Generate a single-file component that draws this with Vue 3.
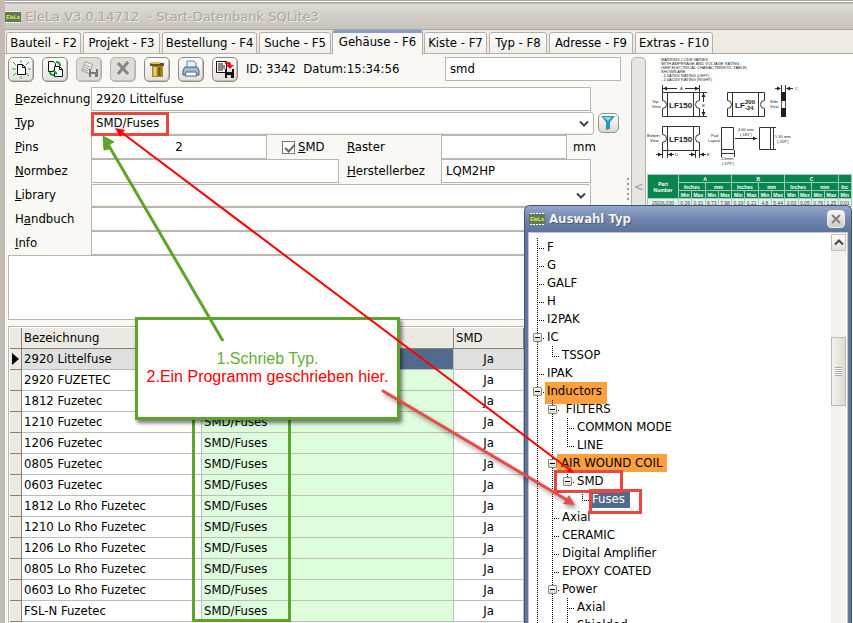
<template>
  <div class="app">
    <header class="titlebar">
      <svg class="logo" viewBox="0 0 16 12" aria-hidden="true">
        <rect y="1" width="16" height="10" fill="#64775a" />
        <path d="M1 .5h15M1 11.5h15" stroke="#fff" stroke-dasharray="2 1" />
        <text x="8" y="8">EleLa</text>
      </svg>
      <h1>EleLa V3.0.14712&nbsp; - Start-Datenbank SQLite3</h1>
    </header>

    <nav class="tabs">
      <button
        v-for="tab in tabs"
        :key="tab.key"
        class="tab"
        :class="[tab.key, { active: activeTab === tab.key }]"
        @click="activeTab = tab.key"
      >{{ tab.label }}</button>
    </nav>

    <main class="workspace">
      <section class="editor">
        <div class="toolbar">
          <button class="tool" aria-label="Neu">
            <svg viewBox="0 0 20 20">
              <path d="M6.500 5.500h5l3 3v7h-8zM11.500 5.500v3h3" fill="#fff" stroke="#111" />
              <path d="M2 3l3 3M18 3l-3 3M2 17l3-3M18 17l-3-3M10 1v3M1 10h4M17 10h3M10 17v3" stroke="#2bb52b" />
            </svg>
          </button>
          <button class="tool" aria-label="Kopieren">
            <svg viewBox="0 0 20 20">
              <path d="M3.500 2.500h5l2 2v8h-7z" fill="#fff" stroke="#111" />
              <path d="M9.500 7.500h5l3 3v7h-8z" fill="#fff" stroke="#111" />
              <path d="M14.500 7.500v3h3" fill="none" stroke="#111" />
              <path d="M11 3q4 0 4 4M5 13q0 3 4 3M8 11l4 4" fill="none" stroke="#18a038" stroke-width="2" />
            </svg>
          </button>
          <button class="tool disabled" aria-label="Speichern" disabled>
            <svg viewBox="0 0 20 20">
              <path d="M6.500 2.500l7 3-3 9-8-3z" fill="#eee" stroke="#999" />
              <path d="M6 6l5 2M5 8l5 2M4 10l5 2" stroke="#999" />
              <path d="M10 10h9v8h-9z" fill="#777" />
              <path d="M12 10h5v3h-5zM12 15h4v3h-4z" fill="#ddd" />
            </svg>
          </button>
          <button class="tool disabled" aria-label="Abbrechen" disabled>
            <svg viewBox="0 0 20 20">
              <path d="M5 4l10 11M15 3L5 15" stroke="#858585" stroke-width="3" />
            </svg>
          </button>
          <button class="tool" aria-label="Löschen">
            <svg viewBox="0 0 20 20">
              <path d="M5 6h11v12H5z" fill="#a8862b" />
              <path d="M3 4h14v3H3z" fill="#6d5412" />
              <path d="M4 3h9v2H4z" fill="#d8c050" />
              <path d="M8 8v9" stroke="#e8d36c" stroke-width="3" />
              <path d="M12.500 8v9" stroke="#6d5412" stroke-width="2" />
            </svg>
          </button>
          <button class="tool" aria-label="Drucken">
            <svg viewBox="0 0 20 20">
              <path d="M6 9V2h7l2 2v5" fill="#e6f3ff" stroke="#5c86b0" />
              <path d="M4 8h12l2 3v5H2v-5z" fill="#9fbbd8" stroke="#47617e" />
              <path d="M5 13h10l1 4H4z" fill="#fff" stroke="#47617e" />
            </svg>
          </button>
          <button class="tool" aria-label="Exportieren">
            <svg viewBox="0 0 20 20">
              <path d="M1.500 2.500h10v11h-10z" fill="#fff" stroke="#111" />
              <path d="M3 5h5M3 7h7M3 9h7M3 11h5" stroke="#111" />
              <path d="M10 3h4q2 0 2 3h3l-4 4-4-4h2q0-1-3-1z" fill="#f01010" />
              <path d="M10 10h9v9h-9z" fill="#111" />
              <path d="M12 10h5v3h-5zM12 16h4v3h-4z" fill="#ddd" />
            </svg>
          </button>
          <span class="record">ID: 3342&nbsp; Datum:15:34:56</span>
          <input class="field search" v-model="search" aria-label="Suche" />
        </div>

        <form class="form" @submit.prevent>
          <div class="row">
            <label for="bez"><u>B</u>ezeichnung</label>
            <input id="bez" class="field grow" v-model="part.bezeichnung" />
          </div>
          <div class="row wide">
            <label for="typ"><u>T</u>yp</label>
            <div class="combo">
              <select id="typ" v-model="part.typ">
                <option>SMD/Fuses</option>
              </select>
              <svg viewBox="0 0 10 7"><path d="M1 1.500l4 4 4-4" /></svg>
            </div>
            <button class="filter" type="button" aria-label="Filter">
              <svg viewBox="0 0 16 16">
                <path d="M1 1h14l-5 6v7l-4 1V7z" fill="#2b96b8" />
                <path d="M3 2h9l-4 4z" fill="#8bd3e8" />
              </svg>
            </button>
          </div>
          <div class="row">
            <label for="pins"><u>P</u>ins</label>
            <input id="pins" class="field grow centered" v-model="part.pins" />
            <label class="check"><input type="checkbox" v-model="part.smd" /><span><u>S</u>MD</span></label>
            <label class="second" for="raster"><u>R</u>aster</label>
            <input id="raster" class="field raster" v-model="part.raster" />
            <span class="unit">mm</span>
          </div>
          <div class="row">
            <label for="norm"><u>N</u>ormbez</label>
            <input id="norm" class="field grow" v-model="part.normbez" />
            <label class="second" for="herst"><u>H</u>erstellerbez</label>
            <input id="herst" class="field maker" v-model="part.hersteller" />
          </div>
          <div class="row">
            <label for="lib"><u>L</u>ibrary</label>
            <div class="combo">
              <select id="lib" v-model="part.library">
                <option value=""></option>
              </select>
              <svg viewBox="0 0 10 7"><path d="M1 1.500l4 4 4-4" /></svg>
            </div>
          </div>
          <div class="row">
            <label for="hand">H<u>a</u>ndbuch</label>
            <input id="hand" class="field grow" v-model="part.handbuch" />
          </div>
          <div class="row">
            <label for="info"><u>I</u>nfo</label>
            <input id="info" class="field grow" v-model="part.info" />
          </div>
        </form>

        <textarea class="memo" aria-label="Bemerkung"></textarea>

        <div class="grid-frame">
          <table class="parts">
            <colgroup>
              <col class="c-mark" /><col class="c-name" /><col class="c-typ" /><col class="c-smd" /><col />
            </colgroup>
            <thead>
              <tr><th></th><th>Bezeichnung</th><th></th><th>SMD</th><th></th></tr>
            </thead>
            <tbody>
              <tr v-for="(row, i) in parts" :key="row.name" :class="{ current: i === selected }" @click="selected = i">
                <th><i v-if="i === selected" class="pointer"></i></th>
                <td>{{ row.name }}</td>
                <td class="typ">{{ row.typ }}</td>
                <td class="ja">Ja</td>
                <td></td>
              </tr>
            </tbody>
          </table>
        </div>
      </section>

      <div class="splitter"><span class="grip"></span><button class="collapse" aria-label="Einklappen">&lt;</button></div>

      <aside class="datasheet">
        <svg class="drawing" viewBox="0 0 206 120">
          <g class="code">
            <text x="14" y="7">MARKING CODE VARIES</text>
            <text x="14" y="11">WITH AMPERAGE AND VOLTAGE RATING.</text>
            <text x="14" y="15">(SEE ELECTRICAL CHARACTERISTIC TABLE)</text>
            <text x="14" y="19">SHOWN ARE:</text>
            <text x="14" y="23">- 1.5A/30V RATING (LEFT)</text>
            <text x="14" y="27">- 2.0A/24V RATING (RIGHT)</text>
          </g>
          <g fill="none" stroke="#333">
            <path d="M15.500 38.500h37v8a4 4 0 0 0 0 8v8h-37v-8a4 4 0 0 0 0-8zM20.500 38v24M46.500 38v24" />
            <path d="M15.500 72.500h37v8a4 4 0 0 0 0 8v8h-37v-8a4 4 0 0 0 0-8zM20.500 72v24M46.500 72v24" />
            <path d="M80.500 38.500h37v8a4 4 0 0 0 0 8v8h-37v-8a4 4 0 0 0 0-8zM85.500 38v24M111.500 38v24" />
            <path d="M74.500 73.500h12v22h-12zM112.500 73.500h11v22h-11z" />
            <path d="M15.500 31v7M52.500 31v7M16 34.500h14M38 34.500h14M56.500 39v9M56.500 55v8M53 38.500h7M53 62.500h7" />
            <path d="M88 84.500h22M124 73.500h5M124 95.500h5M126.500 74v21" />
            <path d="M15.500 97v7M20.500 97v7M48.500 97v7M52.500 97v7M9 100.500h6M21 100.500h6M42 100.500h6M53 100.500h6" />
            <path d="M74.500 96v7M87.500 96v7M75 99.500h12M128 34.500h5M140 34.500h6M134.500 31v7M138.500 31v7" />
          </g>
          <path d="M16 34.500l4-2v4zM52 34.500l-4-2v4zM56.500 39l-2 4h4zM56.500 62l-2-4h4zM110 84.500l-4-2v4zM15 100.500l-4-2v4zM21 100.500l4-2v4zM48 100.500l-4-2v4zM53 100.500l4-2v4zM134 34.500l-4-2v4zM139 34.500l4-2v4z" fill="#222" />
          <path d="M134 38h5v9h-5zM134 54h5v9h-5z" fill="#2a1a14" />
          <path d="M134.500 47v7M138.500 47v7" stroke="#555" />
          <g class="mark">
            <text x="22" y="54">LF150</text>
            <text x="22" y="88">LF150</text>
            <text x="88" y="54">LF</text>
          </g>
          <g class="small-mark">
            <text x="98" y="50">200</text>
            <text x="98" y="56">-24</text>
          </g>
          <g class="code">
            <text x="33" y="36">A</text><text x="55" y="53">B</text><text x="148" y="36">C</text>
            <text x="28" y="102">D</text><text x="60" y="102">E</text>
            <text x="5" y="49">Top</text><text x="5" y="54">View</text>
            <text x="0" y="83">Bottom</text><text x="3" y="88">View</text>
            <text x="123" y="49">Side</text><text x="123" y="54">View</text>
            <text x="64" y="83">Pad</text><text x="61" y="88">Layout</text>
            <text x="91" y="77">4.60 mm</text><text x="93" y="82">(.181")</text>
            <text x="128" y="84">5.30 mm</text><text x="130" y="89">(.209")</text>
            <text x="74" y="106">2.0mm</text><text x="75" y="111">(.079")</text>
          </g>
        </svg>
        <table class="dims">
          <thead>
            <tr><th rowspan="3" class="pn">Part<br />Number</th><th v-for="d in dims" :key="d" colspan="4">{{ d }}</th><th></th></tr>
            <tr>
              <template v-for="d in dims" :key="d"><th colspan="2">Inches</th><th colspan="2">mm</th></template>
              <th>Inc</th>
            </tr>
            <tr>
              <template v-for="n in 6" :key="n"><th>Min</th><th>Max</th></template>
              <th>Min</th>
            </tr>
          </thead>
          <tbody>
            <tr><td>2920L030</td><td v-for="(v, i) in dimValues" :key="i">{{ v }}</td></tr>
          </tbody>
        </table>
      </aside>
    </main>

    <section v-if="dialogOpen" class="dialog" role="dialog" aria-label="Auswahl Typ">
      <header class="dialog-title">
        <svg class="logo" viewBox="0 0 16 12" aria-hidden="true">
          <rect y="1" width="16" height="10" fill="#64775a" />
          <path d="M1 .5h15M1 11.5h15" stroke="#fff" stroke-dasharray="2 1" />
          <text x="8" y="8">EleLa</text>
        </svg>
        <h2>Auswahl Typ</h2>
        <button class="close" aria-label="Schließen" @click="dialogOpen = false">
          <svg viewBox="0 0 10 10"><path d="M1 1l8 8M9 1L1 9" /></svg>
        </button>
      </header>
      <div class="dialog-body">
        <ul class="tree">
          <li v-for="(node, i) in tree" :key="i">
            <span v-for="(g, k) in node.guides" :key="k" class="guide" :class="g">
              <button v-if="node.open && k === node.guides.length - 1" class="toggle" aria-label="Zuklappen"></button>
            </span>
            <span class="node" :class="node.mark">{{ node.label }}</span>
          </li>
        </ul>
        <div class="scrollbar">
          <button class="up" aria-label="Nach oben"><svg viewBox="0 0 10 7"><path d="M1 5.500l4-4 4 4" /></svg></button>
          <div class="thumb"><i></i></div>
        </div>
      </div>
    </section>

    <!-- Anleitung über der Oberfläche -->
    <div class="outline column"></div>
    <div class="note">
      <p class="first">1.Schrieb Typ.</p>
      <p class="then">2.Ein Programm geschrieben hier.</p>
    </div>
    <div class="outline typ-field"></div>
    <div class="outline smd-node"></div>
    <div class="outline fuses-node"></div>
    <svg class="arrows" width="853" height="623" viewBox="0 0 853 623" aria-hidden="true">
      <path d="M223 341L109 146" stroke="#5ea42b" stroke-width="3" />
      <path d="M103 136l11 6-4 2-1 5-5 1z" fill="#5ea42b" stroke="#5ea42b" />
      <path d="M121 132L570 470" stroke="#f00" stroke-width="2" />
      <path d="M115 128l10 2-5 7zM574 473l-7-1 3-5z" fill="#f00" />
      <g class="soft">
        <path d="M383 391L567 500" stroke="#e84c44" stroke-width="3" stroke-linecap="round" />
        <path d="M575 505l-12-1 6-9z" fill="#e84c44" />
      </g>
    </svg>
  </div>
</template>

<script setup>
import { ref, reactive } from 'vue'

const tabs = [
  { key: 'bauteil', label: 'Bauteil - F2' },
  { key: 'projekt', label: 'Projekt - F3' },
  { key: 'bestellung', label: 'Bestellung - F4' },
  { key: 'suche', label: 'Suche - F5' },
  { key: 'gehaeuse', label: 'Gehäuse - F6' },
  { key: 'kiste', label: 'Kiste - F7' },
  { key: 'typen', label: 'Typ - F8' },
  { key: 'adresse', label: 'Adresse - F9' },
  { key: 'extras', label: 'Extras - F10' }
]
const activeTab = ref('gehaeuse')
const search = ref('smd')
const selected = ref(0)
const dialogOpen = ref(true)

const part = reactive({
  bezeichnung: '2920 Littelfuse',
  typ: 'SMD/Fuses',
  pins: '2',
  smd: true,
  raster: '',
  normbez: '',
  hersteller: 'LQM2HP',
  library: '',
  handbuch: '',
  info: ''
})

const parts = [
  { name: '2920 Littelfuse' },
  { name: '2920 FUZETEC' },
  { name: '1812 Fuzetec' },
  { name: '1210 Fuzetec', typ: 'SMD/Fuses' },
  { name: '1206 Fuzetec', typ: 'SMD/Fuses' },
  { name: '0805 Fuzetec', typ: 'SMD/Fuses' },
  { name: '0603 Fuzetec', typ: 'SMD/Fuses' },
  { name: '1812 Lo Rho Fuzetec', typ: 'SMD/Fuses' },
  { name: '1210 Lo Rho Fuzetec', typ: 'SMD/Fuses' },
  { name: '1206 Lo Rho Fuzetec', typ: 'SMD/Fuses' },
  { name: '0805 Lo Rho Fuzetec', typ: 'SMD/Fuses' },
  { name: '0603 Lo Rho Fuzetec', typ: 'SMD/Fuses' },
  { name: 'FSL-N Fuzetec', typ: 'SMD/Fuses' }
]

const dims = ['A', 'B', 'C']
const dimValues = ['0.26', '0.31', '6.73', '7.98', '0.19', '0.21', '4.8', '5.44', '0.03', '0.05', '0.76', '1.25', '0.01']

// guides: one entry per level, the last one belongs to the node itself
const tree = [
  { label: 'F', guides: ['tee'] },
  { label: 'G', guides: ['tee'] },
  { label: 'GALF', guides: ['tee'] },
  { label: 'H', guides: ['tee'] },
  { label: 'I2PAK', guides: ['tee'] },
  { label: 'IC', guides: ['tee'], open: true },
  { label: 'TSSOP', guides: ['line', 'end'] },
  { label: 'IPAK', guides: ['tee'] },
  { label: 'Inductors', guides: ['tee'], open: true, mark: 'orange tall' },
  { label: ' FILTERS', guides: ['line', 'tee'], open: true },
  { label: 'COMMON MODE', guides: ['line', 'line', 'tee'] },
  { label: 'LINE', guides: ['line', 'line', 'end'] },
  { label: 'AIR WOUND COIL', guides: ['line', 'tee'], open: true, mark: 'orange' },
  { label: 'SMD', guides: ['line', 'line', 'end'], open: true },
  { label: 'Fuses', guides: ['line', 'line', 'none', 'end'], mark: 'chosen' },
  { label: 'Axial', guides: ['line', 'tee'] },
  { label: 'CERAMIC', guides: ['line', 'tee'] },
  { label: 'Digital Amplifier', guides: ['line', 'tee'] },
  { label: 'EPOXY COATED', guides: ['line', 'tee'] },
  { label: 'Power', guides: ['line', 'tee'], open: true },
  { label: 'Axial', guides: ['line', 'line', 'tee'] },
  { label: 'Shielded', guides: ['line', 'line', 'tee'] }
]
</script>

<style>
body {
  margin: 0;
  background: #f7f6f1;
}
</style>

<style scoped>
* {
  box-sizing: border-box;
}

.app {
  position: relative;
  display: flex;
  flex-direction: column;
  height: 100vh;
  overflow: hidden;
  border-left: 5px solid #c2bbb4;
  background: #f9f8f4;
  color: #000;
  font: 13px/18px "DejaVu Sans Condensed", "DejaVu Sans", sans-serif;
}

button,
input,
select,
textarea {
  font: inherit;
  color: inherit;
  margin: 0;
}

.titlebar {
  display: flex;
  align-items: center;
  gap: 4px;
  height: 30px;
  padding-top: 3px;
  border-top: 1px solid #aaa59f;
  border-bottom: 1px solid #aaa59f;
  background: linear-gradient(#fff 0 1px, #aaa59f 1px 2px, #dedad5 3px, #c7c2ba);
}

h1,
h2 {
  margin: 0;
  font-size: 13px;
}

h1 {
  color: #a9a49d;
  font-family: "DejaVu Sans", sans-serif;
  font-weight: 400;
  text-shadow: 1px 1px 0 #f0eeea;
}

.logo {
  width: 16px;
  height: 12px;
}

.logo text {
  fill: #d6ff2a;
  font: bold 5px "Liberation Sans", sans-serif;
  text-anchor: middle;
}

.tabs {
  display: flex;
  align-items: flex-end;
  gap: 2px;
  height: 24px;
  padding-left: 1px;
  background: #edeae3;
  box-shadow: inset 0 -1px #aaa59b;
}

.tab {
  height: 22px;
  padding: 0 0 1px;
  border: 1px solid #b3afa6;
  border-radius: 3px 3px 0 0;
  background: linear-gradient(#fff, #f0eee9);
  white-space: nowrap;
}

.tab.active {
  height: 24px;
  margin: 0 -1px;
  padding-bottom: 4px;
  border-top: 3px solid #879fc6;
  border-bottom: 0;
  background: #f9f8f4;
}

.bauteil { width: 75px; }
.projekt { width: 77px; }
.bestellung { width: 95px; }
.suche { width: 72px; }
.gehaeuse { width: 91px; }
.kiste { width: 63px; }
.typen { width: 58px; }
.adresse { width: 84px; }
.extras { width: 78px; }

.workspace {
  display: flex;
  flex: 1;
  min-height: 0;
}

.editor {
  display: flex;
  flex: 1;
  flex-direction: column;
  min-width: 0;
}

.toolbar {
  display: flex;
  align-items: center;
  gap: 8px;
  height: 33px;
  padding: 0 10px 3px 3px;
}

.tool {
  flex: none;
  width: 26px;
  height: 25px;
  padding: 1px 2px;
  border: 1px solid #8c8984;
  border-radius: 5px;
  background: linear-gradient(#fff, #e3dfda);
  box-shadow: inset -1px -1px #c3beb8;
}

.tool svg {
  display: block;
  width: 20px;
  height: 20px;
}

.tool.disabled {
  border-color: #b5b1ac;
  background: #e0ddd9;
}

.record {
  flex: 1;
  white-space: nowrap;
}

.field {
  min-width: 0;
  height: 24px;
  padding: 0 4px 1px;
  border: 1px solid #b9b6af;
  border-radius: 0;
  outline: 0;
  background: #fff;
}

.search {
  width: 176px;
}

.form {
  padding-right: 40px;
}

.row {
  display: flex;
  align-items: center;
  height: 24px;
}

.row.wide {
  margin-right: -28px;
}

.row > label:first-child {
  flex: none;
  width: 86px;
  padding-left: 10px;
}

.grow {
  flex: 1;
}

.centered {
  text-align: center;
}

.combo {
  display: grid;
  flex: 1;
  align-items: center;
}

.combo select,
.combo svg {
  grid-area: 1 / 1;
}

.combo select {
  appearance: none;
  width: 100%;
  height: 23px;
  padding: 0 4px;
  border: 1px solid #b9b6af;
  border-radius: 0 3px 3px 0;
  outline: 0;
  background: linear-gradient(#fff 19px, #edeae5);
}

.combo svg {
  justify-self: end;
  width: 10px;
  height: 7px;
  margin-right: 5px;
  pointer-events: none;
}

.combo path,
.up path {
  fill: none;
  stroke: #444;
  stroke-width: 2;
}

.filter {
  width: 21px;
  height: 20px;
  margin-left: 4px;
  padding: 1px;
  border: 1px solid #96928c;
  border-radius: 5px;
  background: linear-gradient(#fff, #ddd9d3);
}

.filter svg {
  display: block;
  width: 16px;
  height: 16px;
}

.check {
  display: flex;
  flex: none;
  align-items: center;
  gap: 3px;
  width: 72px;
  padding-left: 15px;
}

.check input {
  appearance: none;
  width: 13px;
  height: 13px;
  border: 1px solid #777;
  background: #fff;
}

.check input:checked::after {
  content: "";
  display: block;
  width: 4px;
  height: 8px;
  margin-left: 4px;
  border: solid #666;
  border-width: 0 2px 2px 0;
  transform: rotate(42deg);
}

.second {
  flex: none;
  width: 102px;
  padding-left: 8px;
}

.raster {
  width: 126px;
}

.unit {
  width: 24px;
  padding-left: 6px;
}

.maker {
  width: 150px;
}

.memo {
  flex: none;
  height: 65px;
  margin: 0 3px 6px;
  border: 1px solid #b9b6af;
  outline: 0;
  background: #fff;
  resize: none;
}

.grid-frame {
  flex: 1;
  min-height: 0;
  overflow: hidden;
  margin: 0 3px;
  padding: 1px;
  border: 1px solid #b9b6af;
  border-bottom: 0;
  background: #fff;
}

.parts {
  width: 100%;
  table-layout: fixed;
  border-collapse: separate;
  border-spacing: 0;
}

.c-mark { width: 12px; }
.c-name { width: 180px; }
.c-typ { width: 252px; }
.c-smd { width: 70px; }

.parts th,
.parts td {
  height: 21px;
  padding: 0 2px;
  border-right: 1px solid #bcbcbc;
  border-bottom: 1px solid #bcbcbc;
  font-weight: 400;
  line-height: 20px;
  text-align: left;
  white-space: nowrap;
}

.parts th {
  border-color: #85827d;
  background: #ece9e2;
}

.parts .typ {
  background: #ddfddd;
}

.parts .ja {
  text-align: center;
}

.parts .current td {
  background: #e0e0e0;
}

.parts .current .typ {
  background: #526a8b;
  color: #fff;
}

.pointer {
  display: block;
  width: 7px;
  height: 12px;
  background: #000;
  clip-path: polygon(0 0, 100% 50%, 0 100%);
}

.splitter {
  display: flex;
  align-items: flex-start;
  flex: none;
  width: 15px;
  margin-top: 3px;
  border: 1px solid #b3aeaa;
  border-radius: 5px 5px 0 0;
  background: #e8e4e2;
}

.grip {
  flex: none;
  width: 2px;
  height: 24px;
  margin: 120px 5px 0 -5px;
  background: repeating-linear-gradient(#999 0 2px, transparent 2px 5px);
}

.collapse {
  margin-top: 120px;
  padding: 0;
  border: 0;
  background: none;
  color: #999;
}

.datasheet {
  flex: none;
  width: 207px;
  overflow: hidden;
  padding-left: 1px;
  background: #fff;
}

.drawing {
  display: block;
  width: 206px;
  height: 120px;
}

.code {
  fill: #222;
  font: 4px "Liberation Sans", sans-serif;
}

.mark {
  fill: #222;
  font: bold 8px "Liberation Sans", sans-serif;
}

.small-mark {
  fill: #222;
  font: bold 6px "Liberation Sans", sans-serif;
}

.dims {
  width: 205px;
  table-layout: fixed;
  border-collapse: collapse;
  font: 5px/6px "Liberation Sans", sans-serif;
}

.dims th,
.dims td {
  height: 8px;
  padding: 0;
  border: 1px solid #9fcdb6;
  text-align: center;
}

.dims th {
  background: #07854f;
  color: #fff;
}

.dims td {
  background: #e4f1ea;
  color: #444;
}

.pn {
  width: 31px;
}

.dialog {
  position: absolute;
  top: 205px;
  right: 1px;
  bottom: 0;
  display: flex;
  flex-direction: column;
  width: 328px;
  border: 1px solid #3f5479;
  border-bottom: 0;
  border-radius: 6px 6px 0 0;
  background: #5f779f;
}

.dialog-title {
  display: flex;
  align-items: center;
  gap: 4px;
  height: 26px;
  padding: 0 6px 0 4px;
  border-radius: 5px 5px 0 0;
  background: linear-gradient(#94a6c8, #7187ae 50%, #5c739c);
}

h2 {
  flex: 1;
  color: #f3f1ec;
  text-shadow: 1px 1px 1px #44587c;
}

.close {
  width: 18px;
  height: 18px;
  padding: 3px;
  border: 1px solid #eee;
  border-radius: 4px;
  background: linear-gradient(#f8f7f5, #cfcbc5);
}

.close svg {
  display: block;
  width: 10px;
  height: 10px;
}

.close path {
  stroke: #857f78;
  stroke-width: 2;
}

.dialog-body {
  display: flex;
  flex: 1;
  min-height: 0;
  margin: 0 3px;
  padding: 1px 1px 0;
  border: 1px solid #c9c5be;
  border-bottom: 0;
  background: #fff;
}

.tree {
  flex: 1;
  overflow: hidden;
  margin: 0;
  padding: 4px 0 0;
  list-style: none;
}

.tree li {
  display: flex;
  height: 18px;
}

.guide {
  display: flex;
  flex: none;
  align-items: center;
  width: 15px;
  padding-left: 3px;
  background-repeat: no-repeat;
}

.line {
  background-image: repeating-linear-gradient(#000 0 1px, transparent 1px 2px);
  background-position: 7px 0;
  background-size: 1px 18px;
}

.tee,
.end {
  background-image: repeating-linear-gradient(#000 0 1px, transparent 1px 2px), repeating-linear-gradient(90deg, #000 0 1px, transparent 1px 2px);
  background-position: 7px 0, 9px 10px;
  background-size: 1px 18px, 5px 1px;
}

.end {
  background-size: 1px 11px, 5px 1px;
}

.toggle {
  width: 9px;
  height: 9px;
  padding: 0;
  border: 1px solid #8d8982;
  border-radius: 1px;
  background: linear-gradient(#000, #000) 1px 3px / 5px 1px no-repeat, linear-gradient(#fff, #ddd8d0);
}

.node {
  padding: 0 2px;
  white-space: pre;
}

.orange {
  min-width: 110px;
  margin-left: -3px;
  padding-left: 4px;
  background: #ffa03f;
}

.orange.tall {
  height: 22px;
  min-width: 62px;
  margin: 0;
  padding-left: 2px;
}

.chosen {
  min-width: 40px;
  background: #526a8b;
  color: #fff;
}

.scrollbar {
  display: flex;
  flex: none;
  flex-direction: column;
  width: 15px;
  background: #f4f1f0;
}

.up {
  height: 17px;
  padding: 0 2px;
  border: 1px solid #c6c2bb;
  background: linear-gradient(#fff, #e2dfd9);
}

.up svg {
  display: block;
  width: 10px;
  height: 7px;
}

.thumb {
  display: grid;
  place-items: center;
  height: 69px;
  margin-top: 86px;
  border: 1px solid #bdb9b2;
  background: linear-gradient(90deg, #f3f1ee, #dedad4);
}

.thumb i {
  width: 7px;
  height: 9px;
  background: repeating-linear-gradient(#aaa 0 1px, #fff 1px 2px);
}

.note {
  position: absolute;
  top: 317px;
  left: 130px;
  width: 265px;
  height: 103px;
  padding-top: 30px;
  border: 3px solid #5ea42b;
  background: #fff;
  box-shadow: 2px 3px 4px #0008;
  font: 16px/18px "Liberation Sans", Arial, sans-serif;
  text-align: center;
}

.note p {
  margin: 0;
  white-space: nowrap;
}

.first {
  color: #68ab37;
}

.then {
  color: #f00;
}

.outline {
  position: absolute;
  border: 3px solid #e8483f;
  pointer-events: none;
}

.column {
  top: 400px;
  left: 187px;
  width: 99px;
  height: 222px;
  border-color: #5ea42b;
}

.typ-field {
  top: 112px;
  left: 86px;
  width: 78px;
  height: 24px;
}

.smd-node {
  top: 470px;
  left: 549px;
  width: 69px;
  height: 23px;
}

.fuses-node {
  top: 489px;
  left: 584px;
  width: 53px;
  height: 25px;
}

.arrows {
  position: absolute;
  top: 0;
  left: -5px;
  pointer-events: none;
}

.soft {
  filter: drop-shadow(2px 3px 2px #0006);
}
</style>
